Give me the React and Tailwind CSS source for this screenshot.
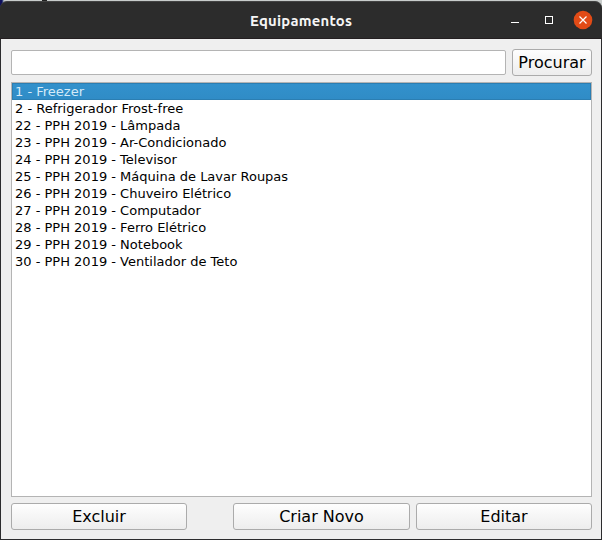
const items = [
  "1 - Freezer", "2 - Refrigerador Frost-free", "22 - PPH 2019 - Lâmpada", "23 - PPH 2019 - Ar-Condicionado",
  "24 - PPH 2019 - Televisor", "25 - PPH 2019 - Máquina de Lavar Roupas", "26 - PPH 2019 - Chuveiro Elétrico",
  "27 - PPH 2019 - Computador", "28 - PPH 2019 - Ferro Elétrico", "29 - PPH 2019 - Notebook", "30 - PPH 2019 - Ventilador de Teto",
];

function Button({ className, children }) {
  return (
    <button className={`flex h-[27px] items-center justify-center rounded-[3px] border border-[#ababab] bg-linear-to-b from-[#fefefe] to-[#ededed] text-[16px] leading-[19px] whitespace-nowrap text-black ${className}`}>
      {children}
    </button>
  );
}

export default function App() {
  return (
    <div className="flex h-[540px] w-[602px] flex-col bg-linear-to-r from-[#10105c] from-[2px] to-[#c8cccb] to-[4px] font-['DejaVu_Sans',sans-serif]">
      <div className="flex h-px pl-[42px]"><span className="w-[5px] bg-[#222]" /></div>
      <header className="grid h-[38px] grid-cols-[1fr_auto_1fr] items-center rounded-t-[7px] border-t border-b border-t-[#434343] border-b-[#241f21] bg-[#2c2c2c] text-white">
        <span />
        <h1 className="scale-x-[1.06] pt-px font-['Ubuntu','Open_Sans',sans-serif] text-[14px] leading-[20px] font-bold tracking-[0.2px] text-[#f5f5f5]">Equipamentos</h1>
        <svg className="justify-self-end" width="96" height="36" fill="none" aria-hidden="true">
          <path d="M5 20.5h8" stroke="#fff" />
          <rect x="39.5" y="14.5" width="7" height="7" stroke="#fff" />
          <circle cx="77" cy="18" r="9.3" fill="#e24b16" />
          <path d="m73.5 14.5 7 7m0-7-7 7" stroke="#fff" strokeWidth="1.2" />
        </svg>
      </header>
      <main className="flex flex-1 flex-col border-x border-b border-[#2c2c2e] bg-[#efefef] pt-[10px] pr-[9px] pb-[9px] pl-[10px]">
        <div className="flex h-[27px] items-center gap-[6px]">
          <input className="h-[25px] w-[495px] rounded-[2px] border border-[#b4b4b4] bg-white" />
          <Button className="w-[80px]">Procurar</Button>
        </div>
        <ul className="mt-[6px] h-[415px] border border-[#b4b4b4] bg-white text-[13px] text-black">
          {items.map((t, i) => (
            <li key={t} className={i === 0 ? "h-[17px] border border-[#2b7eb2] bg-linear-to-b from-[#3291cc] to-[#308cc6] pl-[2px] leading-[15px] text-[#d5eaf8]" : "h-[17px] pl-[3px] leading-[17px]"}>{t}</li>
          ))}
        </ul>
        <div className="mt-[6px] flex">
          <Button className="w-[176px]">Excluir</Button>
          <Button className="ml-[46px] w-[177px]">Criar Novo</Button>
          <Button className="ml-[6px] w-[176px]">Editar</Button>
        </div>
      </main>
    </div>
  );
}
